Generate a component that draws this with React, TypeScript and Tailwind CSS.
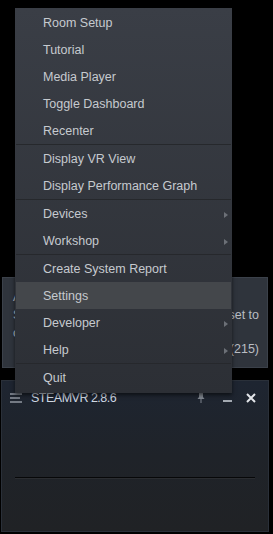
import { Fragment } from 'react'

type Item = { label: string; sub?: boolean; active?: boolean }

// menu groups, separated by a thin rule
const groups: Item[][] = [
    [{ label: 'Room Setup' }, { label: 'Tutorial' }, { label: 'Media Player' }, { label: 'Toggle Dashboard' }, { label: 'Recenter' }],
    [{ label: 'Display VR View' }, { label: 'Display Performance Graph' }],
    [{ label: 'Devices', sub: true }, { label: 'Workshop', sub: true }],
    [{ label: 'Create System Report' }, { label: 'Settings', active: true }, { label: 'Developer', sub: true }, { label: 'Help', sub: true }],
    [{ label: 'Quit' }],
]

function Arrow() {
    return (
        <svg width="4" height="6" viewBox="0 0 4 6" className="ml-auto mr-[3px]">
            <path d="M0 0 L4 3 L0 6 Z" fill="#6c7077" />
        </svg>
    )
}

function Menu() {
    return (
        <div className="absolute left-[15px] top-[8px] w-[217px] pt-[1px] pb-[2px] bg-gradient-to-b from-[#3a3e46] to-[#2c2f35] shadow-[0_2px_4px_rgba(0,0,0,0.6)]">
            {groups.map((g, gi) => (
                <Fragment key={gi}>
                    {gi > 0 && <div className="h-px mx-[1px] bg-[#26282c]" />}
                    {g.map((it) => (
                        <div
                            key={it.label}
                            className={`flex items-center h-[27px] pt-[2px] pr-[1px] text-[12.5px] text-[#c6cacf] ${it.active ? 'bg-[#44474b] mx-[1px] pl-[27px]' : 'pl-[28px]'}`}
                        >
                            <span>{it.label}</span>
                            {it.sub && <Arrow />}
                        </div>
                    ))}
                </Fragment>
            ))}
        </div>
    )
}

export default function App() {
    return (
        <div className="relative w-[273px] h-[534px] bg-black overflow-hidden" style={{ fontFamily: '"Liberation Sans", Arial, sans-serif' }}>
            {/* dialog behind the menu */}
            <div className="ml-[2px] mt-[277px] w-[266px] h-[91px] bg-[#2f343c] border border-[#3b414a] pl-[10px] pr-[8px] pt-[10px] text-[12.5px] leading-[18px] text-[#b9bdc3]">
                <div className="whitespace-nowrap">A</div>
                <div className="flex justify-between whitespace-nowrap">
                    <span>S</span>
                    <span>reset to</span>
                </div>
                <div className="whitespace-nowrap">c</div>
                <div className="text-right whitespace-nowrap mt-[-2px]">(215)</div>
            </div>

            {/* SteamVR status window */}
            <div className="ml-[1px] mt-[12px] w-[268px] h-[152px] flex flex-col border border-[#2a3039] bg-gradient-to-b from-[#1e2531] via-[#1f2329] to-[#202225]">
                <div className="flex items-center h-[34px] pl-[8px] pr-[12px]">
                    <svg width="13" height="10" viewBox="0 0 13 10" className="mr-[8px] shrink-0">
                        <rect x="0" y="0.5" width="12" height="1" fill="#c9d0da" />
                        <rect x="0" y="4.5" width="10" height="1" fill="#c9d0da" />
                        <rect x="0" y="8.5" width="12" height="1" fill="#c9d0da" />
                    </svg>
                    <span className="text-[12.5px] tracking-[-0.5px] whitespace-nowrap text-[#d0d9e4]">STEAMVR 2.8.6</span>
                    <div className="ml-auto flex items-center">
                        <svg width="8" height="10" viewBox="0 0 8 10" className="mr-[18px]">
                            <path d="M2 0 H6 V4 L7.5 6 H0.5 L2 4 Z M3.5 6 H4.5 V10 H3.5 Z" fill="#7e848d" />
                        </svg>
                        <svg width="9" height="10" viewBox="0 0 9 10" className="mr-[14px]">
                            <rect x="0" y="7" width="9" height="2" fill="#a3a9b1" />
                        </svg>
                        <svg width="10" height="10" viewBox="0 0 10 10">
                            <path d="M1 1 L9 9 M9 1 L1 9" stroke="#e3e6ea" strokeWidth="2" />
                        </svg>
                    </div>
                </div>
                <div className="mx-[13px] mt-[62px] h-[2px] border-t border-[#070809] border-b border-b-[#2b2d31]" />
            </div>

            <Menu />
        </div>
    )
}
